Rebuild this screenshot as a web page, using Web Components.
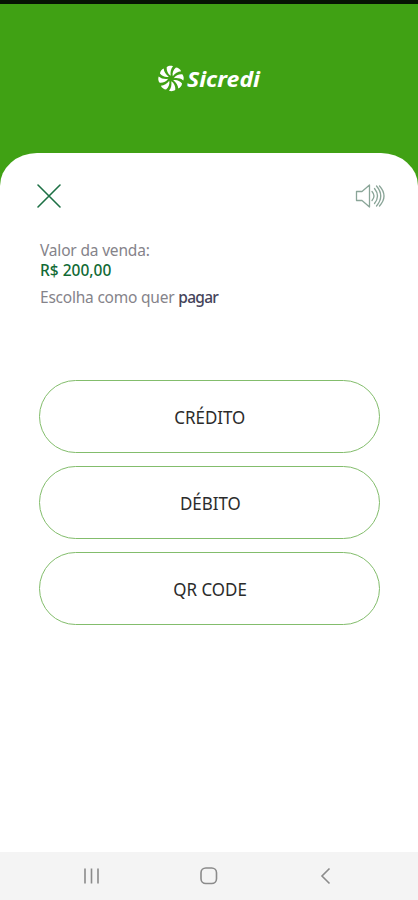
<!DOCTYPE html>
<html lang="pt-BR">
<head>
<meta charset="utf-8">
<title>Sicredi</title>
<style>
	body {
		margin: 0;
		font-family: "Noto Sans", "Open Sans", sans-serif;
	}
</style>
</head>
<body>

<template id="sale-screen-tmpl">
	<style>
		:host {
			display: flex;
			flex-direction: column;
			box-sizing: border-box;
			height: 900px;
			border-top: 4px solid #061503;
			background: #40a114;
			overflow: hidden;
		}

		header {
			flex: none;
			display: flex;
			justify-content: center;
			height: 149px;
		}

		main {
			flex: 1;
			box-sizing: border-box;
			padding: 27px 32px 0 36px;
			border-radius: 37px 37px 0 0 / 33px 33px 0 0;
			background: #fff;
		}
	</style>

	<header><slot name="logo"></slot></header>
	<main><slot></slot></main>
	<slot name="nav"></slot>
</template>

<template id="brand-logo-tmpl">
	<style>
		:host {
			display: block;
			padding-top: 56px;
		}

		svg {
			display: block;
		}

		text {
			font: italic 700 22px "Noto Sans", "Open Sans", sans-serif;
		}
	</style>

	<svg width="106" height="36" viewBox="0 0 106 36" fill="#fff">
		<defs>
			<path id="blade" d="M-.3-2.800C-3.200-4.600-4.600-8-4.300-11.300C-2.600-12.800 0-13.100 2-12.300C-.2-9.800-.8-6.400-.3-2.800Z"/>
		</defs>
		<g transform="translate(15 18.500)">
			<use href="#blade"/>
			<use href="#blade" transform="rotate(45)"/>
			<use href="#blade" transform="rotate(90)"/>
			<use href="#blade" transform="rotate(135)"/>
			<use href="#blade" transform="rotate(180)"/>
			<use href="#blade" transform="rotate(225)"/>
			<use href="#blade" transform="rotate(270)"/>
			<use href="#blade" transform="rotate(315)"/>
		</g>
		<text x="31" y="26.500" textLength="73" lengthAdjust="spacingAndGlyphs">Sicredi</text>
	</svg>
</template>

<template id="sheet-tools-tmpl">
	<style>
		:host {
			display: flex;
			justify-content: space-between;
			align-items: center;
			height: 32px;
		}

		svg {
			display: block;
			fill: none;
			stroke-linecap: round;
			stroke-linejoin: round;
		}
	</style>

	<svg width="26" height="26" viewBox="0 0 26 26" stroke="#1d7045" stroke-width="1.600">
		<path d="M2 2L24 24M24 2L2 24"/>
	</svg>
	<svg width="32" height="28" viewBox="0 0 32 28" stroke="#8aa598" stroke-width="1.300">
		<path d="M8 9.500H2.500V18.500H8M8 9.500L15.500 3V25L8 18.500"/>
		<path d="M18 9.500Q22 14 18 18.500"/>
		<path d="M20.500 6.500Q26.500 14 20.500 21.500"/>
		<path d="M22.500 4Q31 14 22.500 24"/>
		<path d="M25.500 4Q34.500 14 25.500 24"/>
	</svg>
</template>

<template id="sale-summary-tmpl">
	<style>
		:host {
			display: block;
			padding: 28px 0 0 4px;
			color: #85838a;
			font-size: 15.500px;
			line-height: 20px;
		}

		p {
			width: max-content;
			margin: 0;
			letter-spacing: -.18px;
		}

		.amount {
			color: #116a35;
			font-weight: 500;
			letter-spacing: 0;
		}

		.hint {
			margin-top: 7px;
			letter-spacing: -.22px;
		}
	</style>

	<p><slot name="label"></slot></p>
	<p class="amount"><slot name="amount"></slot></p>
	<p class="hint"><slot></slot></p>
</template>

<template id="pay-option-tmpl">
	<style>
		:host {
			display: block;
		}

		button {
			display: block;
			box-sizing: border-box;
			width: 100%;
			height: 73px;
			padding: 0 0 0 1px;
			border: 1.500px solid #83bd6c;
			border-radius: 37px;
			background: #fff;
			color: #2b2b2b;
			font: 18px/24px "Noto Sans", "Open Sans", sans-serif;
		}

		span {
			display: inline-block;
			transform: scaleX(.94);
		}
	</style>

	<button type="button"><span><slot></slot></span></button>
</template>

<template id="pay-options-tmpl">
	<style>
		:host {
			display: grid;
			gap: 13px;
			padding: 73px 6px 0 3px;
		}
	</style>

	<slot></slot>
</template>

<template id="system-nav-tmpl">
	<style>
		:host {
			flex: none;
			display: flex;
			justify-content: space-between;
			align-items: center;
			box-sizing: border-box;
			height: 48px;
			padding: 0 82px;
			background: #f4f4f4;
		}

		svg {
			display: block;
			fill: none;
			stroke: #8b8b8b;
			stroke-width: 1.600;
		}
	</style>

	<svg width="20" height="20" viewBox="0 0 20 20"><path d="M3 2.500V17.500M9.500 2.500V17.500M16 2.500V17.500"/></svg>
	<svg width="20" height="20" viewBox="0 0 20 20"><rect x="2" y="2" width="15.500" height="15.500" rx="4.800"/></svg>
	<svg width="20" height="20" viewBox="0 0 20 20"><path d="M13.500 2.500L6 10L13.500 17.500"/></svg>
</template>

<sale-screen>
	<brand-logo slot="logo"></brand-logo>
	<sheet-tools></sheet-tools>
	<sale-summary>
		<span slot="label">Valor da venda:</span>
		<span slot="amount">R$ 200,00</span>
		Escolha como quer <span style="color: #45445a; font-weight: 500; letter-spacing: -.7px">pagar</span>
	</sale-summary>
	<pay-options>
		<pay-option>CRÉDITO</pay-option>
		<pay-option>DÉBITO</pay-option>
		<pay-option>QR CODE</pay-option>
	</pay-options>
	<system-nav slot="nav"></system-nav>
</sale-screen>

<script>
	class TemplateElem extends HTMLElement {
		constructor () {
			super();

			this.attachShadow({mode: 'open'})
				.appendChild(this.template);
		};

		get template () {
			return document
				.querySelector('#' + this.localName + '-tmpl')
				.content
				.cloneNode(true);
		};
	};

	customElements.define('sale-screen', class extends TemplateElem {});
	customElements.define('brand-logo', class extends TemplateElem {});
	customElements.define('sheet-tools', class extends TemplateElem {});
	customElements.define('sale-summary', class extends TemplateElem {});
	customElements.define('pay-option', class extends TemplateElem {});
	customElements.define('pay-options', class extends TemplateElem {});
	customElements.define('system-nav', class extends TemplateElem {});
</script>
</body>
</html>
